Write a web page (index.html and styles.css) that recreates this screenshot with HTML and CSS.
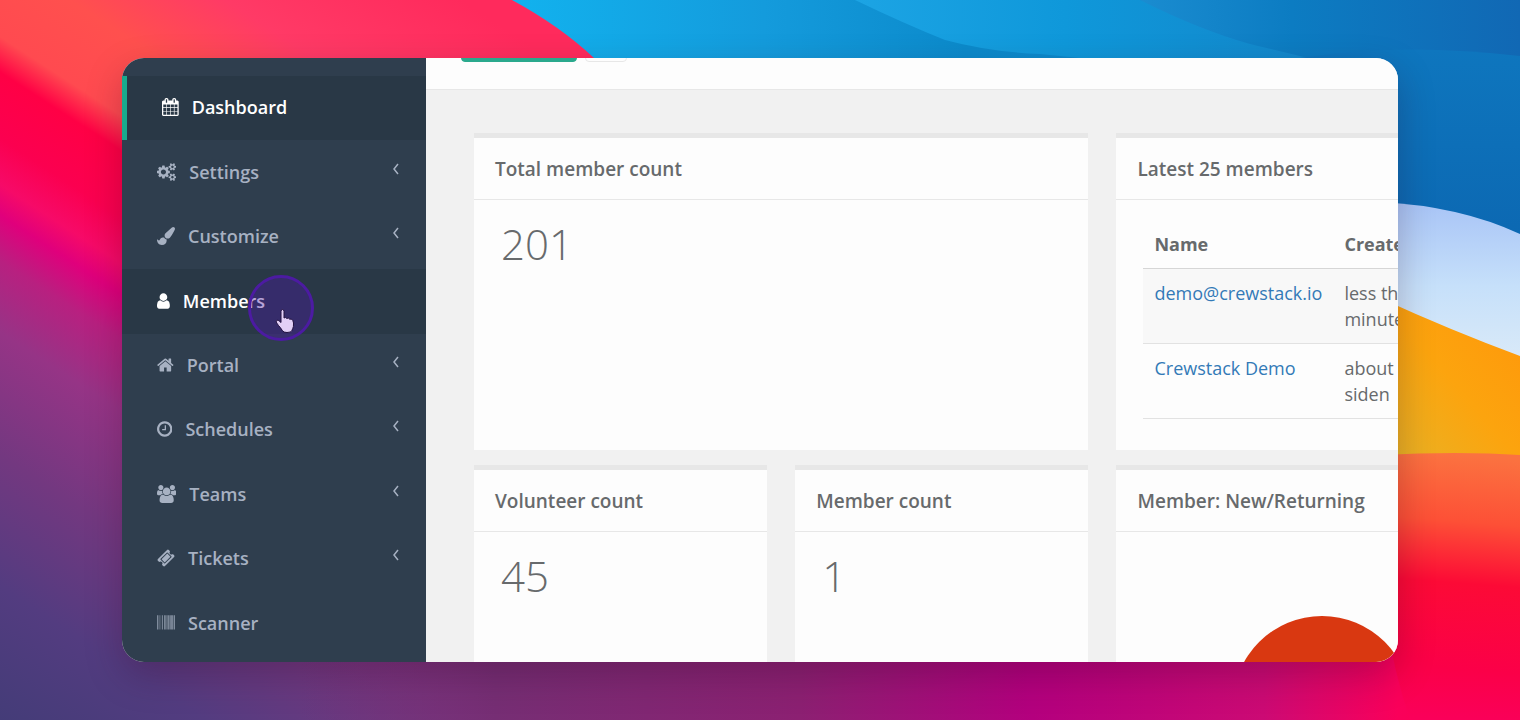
FILE: index.html
```html
<!DOCTYPE html>
<html lang="en">
<head>
    <meta charset="UTF-8">
    <meta name="viewport" content="width=device-width, initial-scale=1.0">
    <title>Crewstack</title>
    <link rel="stylesheet" href="styles.css">
</head>
<body>

    <!-- Wallpaper -->
    <svg class="wallpaper" viewBox="0 0 1520 720" preserveAspectRatio="none" aria-hidden="true">
        <defs>
            <linearGradient id="base" gradientUnits="userSpaceOnUse" x1="0" y1="-300" x2="-466" y2="417">
                <stop offset="0" stop-color="#ff2a5c"/>
                <stop offset=".15" stop-color="#ff3a66"/>
                <stop offset=".25" stop-color="#ff504e"/>
                <stop offset=".33" stop-color="#ff4a50"/>
                <stop offset=".365" stop-color="#ff0045"/>
                <stop offset=".43" stop-color="#fb0050"/>
                <stop offset=".475" stop-color="#f60a68"/>
                <stop offset=".505" stop-color="#e0007c"/>
                <stop offset=".55" stop-color="#b82080"/>
                <stop offset=".62" stop-color="#963486"/>
                <stop offset=".74" stop-color="#733880"/>
                <stop offset=".87" stop-color="#533c80"/>
                <stop offset="1" stop-color="#443c78"/>
            </linearGradient>
            <linearGradient id="floor" gradientUnits="userSpaceOnUse" x1="300" y1="0" x2="1520" y2="0">
                <stop offset="0" stop-color="#6e3078" stop-opacity="0"/>
                <stop offset=".16" stop-color="#762e74"/>
                <stop offset=".41" stop-color="#8c2072"/>
                <stop offset=".6" stop-color="#b4007e"/>
                <stop offset=".79" stop-color="#cc0a74"/>
                <stop offset=".9" stop-color="#fa005a"/>
                <stop offset="1" stop-color="#ff0046"/>
            </linearGradient>
            <linearGradient id="blue">
                <stop offset="0" stop-color="#12b2ee"/>
                <stop offset=".25" stop-color="#149bdc"/>
                <stop offset=".45" stop-color="#0c8acb"/>
                <stop offset=".75" stop-color="#0e86cc"/>
                <stop offset="1" stop-color="#106ab6"/>
            </linearGradient>
            <linearGradient id="wave">
                <stop offset="0" stop-color="#1ca4e4"/>
                <stop offset=".4" stop-color="#0f98da"/>
                <stop offset="1" stop-color="#1482c6"/>
            </linearGradient>
            <linearGradient id="deep">
                <stop offset="0" stop-color="#1a8cd0"/>
                <stop offset=".4" stop-color="#0c7cc2"/>
                <stop offset="1" stop-color="#1168b4"/>
            </linearGradient>
            <linearGradient id="slope" x1="0" y1="0" x2="0" y2="1">
                <stop offset="0" stop-color="#0e76be"/>
                <stop offset="1" stop-color="#0c68b2"/>
            </linearGradient>
            <linearGradient id="snow" x1="0" y1="0" x2="0" y2="1">
                <stop offset="0" stop-color="#a8c4f6"/>
                <stop offset=".5" stop-color="#c6e0fa"/>
                <stop offset="1" stop-color="#dcebf8"/>
            </linearGradient>
            <linearGradient id="sand" x1="1" y1="0" x2="0" y2="1">
                <stop offset="0" stop-color="#ff960a"/>
                <stop offset=".5" stop-color="#fca40e"/>
                <stop offset="1" stop-color="#e6b428"/>
            </linearGradient>
            <linearGradient id="ember" gradientUnits="userSpaceOnUse" x1="1450" y1="454" x2="1430" y2="720">
                <stop offset="0" stop-color="#fb7240"/>
                <stop offset=".25" stop-color="#fd5036"/>
                <stop offset=".48" stop-color="#fc0a36"/>
                <stop offset=".8" stop-color="#fb0048"/>
                <stop offset="1" stop-color="#fa005a"/>
            </linearGradient>
        </defs>
        <rect width="1520" height="720" fill="url(#base)"/>
        <rect x="300" y="400" width="1220" height="320" fill="url(#floor)"/>
        <path d="M512 0Q560 26 594 58L640 110H1398V230L1520 260V0z" fill="url(#blue)"/>
        <path d="M855 0Q905 24 945 40Q990 52 1040 54L1080 58H1380L1140 0z" fill="url(#wave)"/>
        <path d="M1140 0Q1200 30 1250 44Q1300 56 1340 66H1520V0z" fill="url(#deep)"/>
        <path d="M1300 58Q1400 42 1520 56V240L1380 205z" fill="url(#slope)"/>
        <path d="M1380 202Q1460 206 1520 234V370H1380z" fill="url(#snow)"/>
        <path d="M1380 298Q1450 330 1520 356V460H1380z" fill="url(#sand)"/>
        <path d="M1380 455Q1460 451 1520 455V720H1410Q1370 600 1380 455z" fill="url(#ember)"/>
    </svg>

    <div class="window">

        <!-- Sidebar -->
        <nav class="sidebar">
            <ul class="menu">
                <li class="active">
                    <a href="#">
                        <svg class="icon" viewBox="64 0 1664 1792"><path d="M192 1664h288v-288h-288v288zm352 0h320v-288h-320v288zm-352-352h288v-320h-288v320zm352 0h320v-320h-320v320zm-352-384h288v-288h-288v288zm736 736h320v-288h-320v288zm-384-736h320v-288h-320v288zm768 736h288v-288h-288v288zm-384-352h320v-320h-320v320zm-352-864v-288q0-13-9.5-22.5t-22.5-9.5h-64q-13 0-22.5 9.5t-9.5 22.5v288q0 13 9.5 22.5t22.5 9.5h64q13 0 22.5-9.5t9.5-22.5zm736 864h288v-320h-288v320zm-384-384h320v-288h-320v288zm384 0h288v-288h-288v288zm32-480v-288q0-13-9.5-22.5t-22.5-9.5h-64q-13 0-22.5 9.5t-9.5 22.5v288q0 13 9.5 22.5t22.5 9.5h64q13 0 22.5-9.5t9.5-22.5zm384-64v1280q0 52-38 90t-90 38h-1408q-52 0-90-38t-38-90v-1280q0-52 38-90t90-38h128v-96q0-66 47-113t113-47h64q66 0 113 47t47 113v96h384v-96q0-66 47-113t113-47h64q66 0 113 47t47 113v96h128q52 0 90 38t38 90z"/></svg>
                        Dashboard
                    </a>
                </li>
                <li>
                    <a href="#">
                        <svg class="icon" viewBox="-64 0 1920 1792">
                            <path d="M832 896q0-106-75-181t-181-75-181 75-75 181 75 181 181 75 181-75 75-181zm384-91v185q0 10-7 19.5t-16 10.5l-155 24q-11 35-32 76 34 48 90 115 7 11 7 20 0 12-7 19-23 30-82.5 89.5t-78.5 59.5q-11 0-21-7l-115-90q-37 19-77 31-11 108-23 155-7 24-30 24h-186q-11 0-20-7.5t-10-17.5l-23-153q-34-10-75-31l-118 89q-7 7-20 7-11 0-21-8-144-133-144-160 0-9 7-19 10-14 41-53t47-61q-23-44-35-82l-152-24q-10-1-17-9.5t-7-19.5v-185q0-10 7-19.5t16-10.5l155-24q11-35 32-76-34-48-90-115-7-11-7-20 0-12 7-20 22-30 82-89t79-59q11 0 21 7l115 90q34-18 77-32 11-108 23-154 7-24 30-24h186q11 0 20 7.5t10 17.5l23 153q34 10 75 31l118-89q8-7 20-7 11 0 21 8 144 133 144 160 0 8-7 19-12 16-42 54t-45 60q23 48 34 82l152 23q10 2 17 10.5t7 19.5z"/>
                            <path id="cog" d="M1600 1408q0-52-38-90t-90-38-90 38-38 90q0 53 37.5 90.5t90.5 37.5 90.5-37.5 37.5-90.5zm256-70v140q0 16-149 31-12 27-30 52 51 113 51 138 0 4-4 7-122 71-124 71-8 0-46-47t-52-68q-20 2-30 2t-30-2q-14 21-52 68t-46 47q-2 0-124-71-4-3-4-7 0-25 51-138-18-25-30-52-149-15-149-31v-140q0-16 149-31 13-29 30-52-51-113-51-138 0-4 4-7 4-2 35-20t59-34 30-16q8 0 46 46.5t52 67.5q20-2 30-2t30 2q51-71 92-112l6-2q4 0 124 70 4 3 4 7 0 25-51 138 17 23 30 52 149 15 149 31z"/>
                            <use href="#cog" y="-1024"/>
                        </svg>
                        Settings
                        <svg class="arrow" viewBox="0 0 6 12"><path d="M5 1L1 6l4 5"/></svg>
                    </a>
                </li>
                <li>
                    <a href="#">
                        <svg class="icon" viewBox="0 0 1792 1792"><path d="M1615 0q70 0 122.500 46.500t52.500 116.500q0 63-45 151-332 629-465 752-97 91-218 91-126 0-216.500-92.500t-90.500-219.500q0-128 92-212l638-579q59-54 130-54zm-909 1034q39 76 106.500 130t150.500 76l1 71q4 213-129.500 347t-348.500 134q-123 0-218-46.500t-152.500-127.500-86.500-183-29-220q7 5 41 30t62 44.500 59 36.500 46 17q41 0 55-37 25-66 57.500-112.500t69.500-76 88-47.500 103-25.500 125-10.500z"/></svg>
                        Customize
                        <svg class="arrow" viewBox="0 0 6 12"><path d="M5 1L1 6l4 5"/></svg>
                    </a>
                </li>
                <li class="hover">
                    <a href="#">
                        <svg class="icon" viewBox="256 0 1280 1792"><path d="M1536 1399q0 109-62.500 187t-150.500 78h-854q-88 0-150.500-78t-62.500-187q0-85 8.500-160.500t31.500-152 58.500-131 94-89 134.500-34.500q131 128 313 128t313-128q76 0 134.500 34.500t94 89 58.500 131 31.500 152 8.500 160.500zm-256-887q0 159-112.500 271.500t-271.500 112.500-271.500-112.500-112.500-271.500 112.500-271.500 271.500-112.500 271.500 112.500 112.500 271.500z"/></svg>
                        Members
                    </a>
                    <!-- Click highlight with the pointer -->
                    <div class="pointer">
                        <svg class="hand" viewBox="0 0 20 26"><path d="M6 3.500Q6 1.500 7.500 1.500T9 3.500V10Q10.500 8.800 11.800 10.400Q13.500 9.400 14.700 11.200Q16.600 10.400 17.800 12.500Q19 14.500 18.400 18.500Q17.800 21 16.800 22.500Q16.500 24.500 12 24.500Q8.500 24.500 7.500 22.800Q5.500 19.500 3.500 17.500Q1 14.500 1.200 13.200Q1.800 11.600 3.800 12.600L6 14.500z"/></svg>
                    </div>
                </li>
                <li>
                    <a href="#">
                        <svg class="icon" viewBox="64 0 1664 1792"><path d="M1472 992v480q0 26-19 45t-45 19h-384v-384h-256v384h-384q-26 0-45-19t-19-45v-480q0-1 .5-3t.5-3l575-474 575 474q1 2 1 6zm223-69l-62 74q-8 9-21 11h-3q-13 0-21-7l-692-577-692 577q-12 8-24 7-13-2-21-11l-62-74q-8-10-7-23.500t11-21.500l719-599q32-26 76-26t76 26l244 204v-195q0-14 9-23t23-9h192q14 0 23 9t9 23v408l219 182q10 8 11 21.500t-7 23.500z"/></svg>
                        Portal
                        <svg class="arrow" viewBox="0 0 6 12"><path d="M5 1L1 6l4 5"/></svg>
                    </a>
                </li>
                <li>
                    <a href="#">
                        <svg class="icon" viewBox="128 0 1536 1792"><path d="M1024 544v448q0 14-9 23t-23 9h-320q-14 0-23-9t-9-23v-64q0-14 9-23t23-9h224v-352q0-14 9-23t23-9h64q14 0 23 9t9 23zm416 352q0-148-73-273t-198-198-273-73-273 73-198 198-73 273 73 273 198 198 273 73 273-73 198-198 73-273zm224 0q0 209-103 385.500t-279.500 279.500-385.500 103-385.500-103-279.500-279.500-103-385.500 103-385.500 279.500-279.500 385.500-103 385.500 103 279.500 279.500 103 385.500z"/></svg>
                        Schedules
                        <svg class="arrow" viewBox="0 0 6 12"><path d="M5 1L1 6l4 5"/></svg>
                    </a>
                </li>
                <li>
                    <a href="#">
                        <svg class="icon" viewBox="0 0 1920 1792"><path d="M593 896q-162 5-265 128h-134q-82 0-138-40.500t-56-118.500q0-353 124-353 6 0 43.500 21t97.500 42.500 119 21.500q67 0 133-23-5 37-5 66 0 159 81 256zm1071 637q0 120-73 189.500t-194 69.500h-874q-121 0-194-69.500t-73-189.500q0-53 3.500-103.500t14-109 26.500-108.500 43-97.500 62-81 85.500-53.500 111.500-20q10 0 43 21.500t73 48 107 48 135 21.500 135-21.500 107-48 73-48 43-21.500q61 0 111.500 20t85.500 53.500 62 81 43 97.500 26.500 108.500 14 109 3.500 103.500zm-1024-1277q0 106-75 181t-181 75-181-75-75-181 75-181 181-75 181 75 75 181zm704 384q0 159-112.500 271.500t-271.500 112.500-271.500-112.500-112.500-271.500 112.500-271.500 271.500-112.500 271.500 112.500 112.500 271.500zm576 225q0 78-56 118.500t-138 40.500h-134q-103-123-265-128 81-97 81-256 0-29-5-66 66 23 133 23 59 0 119-21.500t97.500-42.500 43.500-21q124 0 124 353zm-128-609q0 106-75 181t-181 75-181-75-75-181 75-181 181-75 181 75 75 181z"/></svg>
                        Teams
                        <svg class="arrow" viewBox="0 0 6 12"><path d="M5 1L1 6l4 5"/></svg>
                    </a>
                </li>
                <li>
                    <a href="#">
                        <svg class="icon" viewBox="0 0 1792 1792"><path d="M1024 452l316 316-572 572-316-316zm-211 979l618-618q19-19 19-45t-19-45l-362-362q-18-18-45-18t-45 18l-618 618q-19 19-19 45t19 45l362 362q18 18 45 18t45-18zm889-637l-907 908q-37 37-90.500 37t-90.500-37l-126-126q56-56 56-136t-56-136-136-56-136 56l-125-126q-37-37-37-90.500t37-90.500l907-906q37-37 90.500-37t90.500 37l125 125q-56 56-56 136t56 136 136 56 136-56l126 125q37 37 37 90.500t-37 90.500z"/></svg>
                        Tickets
                        <svg class="arrow" viewBox="0 0 6 12"><path d="M5 1L1 6l4 5"/></svg>
                    </a>
                </li>
                <li>
                    <a href="#">
                        <svg class="icon" viewBox="0 0 1792 1792"><path d="M0 128h63v1408H0zM94 128h32v1408H94zM220 128h31v1408h-31zM377 128h31v1408h-31zM534 128h62v1408h-62zM722 128h63v1408h-63zM848 128h62v1408h-62zM973 128h63v1408h-63zM1130 128h63v1408h-63zM1256 128h94v1408h-94zM1413 128h62v1408h-62zM1507 128h62v1408h-62zM1664 128h32v1408h-32zM1727 128h65v1408h-65z"/></svg>
                        Scanner
                    </a>
                </li>
            </ul>
        </nav>

        <!-- Main area -->
        <main class="main">
            <div class="topbar">
                <button class="btn btn-primary" type="button" aria-label="Dashboard"></button>
                <button class="btn" type="button" aria-label="More"></button>
            </div>

            <div class="dashboard">
                <section class="card wide">
                    <h2>Total member count</h2>
                    <div class="card-body">
                        <p class="number">201</p>
                    </div>
                </section>

                <section class="card">
                    <h2>Latest 25 members</h2>
                    <div class="card-body">
                        <table class="members">
                            <thead>
                                <tr>
                                    <th>Name</th>
                                    <th>Created</th>
                                </tr>
                            </thead>
                            <tbody>
                                <tr>
                                    <td><a href="#">demo@crewstack.io</a></td>
                                    <td>less than a minute siden</td>
                                </tr>
                                <tr>
                                    <td><a href="#">Crewstack Demo</a></td>
                                    <td>about 2 months siden</td>
                                </tr>
                            </tbody>
                        </table>
                    </div>
                </section>

                <section class="card">
                    <h2>Volunteer count</h2>
                    <div class="card-body">
                        <p class="number">45</p>
                    </div>
                </section>

                <section class="card">
                    <h2>Member count</h2>
                    <div class="card-body">
                        <p class="number">1</p>
                    </div>
                </section>

                <section class="card">
                    <h2>Member: New/Returning</h2>
                    <div class="card-body">
                        <svg class="pie" viewBox="0 0 178 178"><circle cx="89" cy="89" r="89"/></svg>
                    </div>
                </section>
            </div>
        </main>
    </div>

</body>
</html>
```
FILE: styles.css
```css
* {
    box-sizing: border-box;
}

body {
    margin: 0;
    height: 100vh;
    padding: 58px 122px;
    overflow: hidden;
    font-family: "Open Sans", "Noto Sans", sans-serif;
    font-size: 18px;
    line-height: 26px;
    color: #676a6c;
}

a {
    color: #337ab7;
    text-decoration: none;
}

/* Wallpaper */
.wallpaper {
    position: absolute;
    inset: 0;
    width: 100%;
    height: 100%;
    z-index: -1;
}

/* Window */
.window {
    display: flex;
    height: 100%;
    border-radius: 22px;
    overflow: hidden;
    background-color: #f1f1f1;
    box-shadow: 0 14px 36px rgba(40, 0, 30, 0.25);
}

/* Sidebar */
.sidebar {
    flex: 0 0 304px;
    padding: 18px 0 6px;
    background-color: #2f3e4e;
}

.menu {
    display: flex;
    flex-direction: column;
    height: 100%;
    margin: 0;
    padding: 0;
    list-style: none;
}

.menu li {
    flex: 1;
    position: relative;
}

.menu a {
    display: flex;
    align-items: center;
    gap: 13px;
    height: 100%;
    padding: 0 27px 2px 35px;
    color: #a7b1c2;
    font-weight: 600;
}

.menu .active {
    border-left: 5px solid #19aa8d;
}

.menu .active a,
.menu .hover a {
    background-color: #293846;
    color: #fff;
}

.icon {
    height: 18px;
    fill: currentColor;
}

.arrow {
    width: 6px;
    height: 12px;
    margin-left: auto;
    margin-bottom: 6px;
    fill: none;
    stroke: currentColor;
    stroke-width: 1.5;
}

/* Pointer */
.pointer {
    position: absolute;
    left: 126px;
    top: 6px;
    width: 66px;
    height: 66px;
    border: 3px solid #4c1ba2;
    border-radius: 50%;
    background-color: rgba(76, 27, 162, 0.4);
    z-index: 1;
}

.hand {
    position: absolute;
    left: 24px;
    top: 30px;
    width: 20px;
    height: 26px;
    fill: #e2cff6;
    stroke: #21103f;
    stroke-width: 1;
}

/* Main area */
.main {
    flex: 1;
    min-width: 0;
    overflow: hidden;
}

.topbar {
    display: flex;
    gap: 8px;
    height: 32px;
    padding: 0 35px;
    background-color: #fdfdfd;
    border-bottom: 1px solid #e7e7e7;
}

/* The bar is scrolled up, only the lower edge of the buttons shows */
.btn {
    width: 42px;
    height: 40px;
    margin-top: -36px;
    border: 1px solid #e7e7e7;
    border-radius: 4px;
    background-color: #fdfdfd;
}

.btn-primary {
    width: 116px;
    border-color: #2aa98d;
    background-color: #2aa98d;
}

/* Cards */
.dashboard {
    display: grid;
    grid-template-columns: 5fr 5fr 7fr;
    gap: 15px 28px;
    width: 118%;
    padding: 43px 46px 43px 48px;
}

.card {
    min-width: 0;
    border-top: 5px solid #e7e7e7;
    background-color: #fdfdfd;
}

.wide {
    grid-column: span 2;
}

.card h2 {
    margin: 0;
    padding: 18px 21px 17px;
    border-bottom: 1px solid #e7e7e7;
    font-size: 19px;
    font-weight: 600;
    line-height: 26px;
}

.card-body {
    padding: 20px 27px 31px;
}

.number {
    margin: 0;
    font-size: 42px;
    font-weight: 300;
    line-height: 48px;
}

/* Members table */
.members {
    width: 100%;
    border-collapse: collapse;
}

.members th,
.members td {
    padding: 11px;
    border-bottom: 1px solid #e2e2e2;
    text-align: left;
    vertical-align: top;
}

.members th {
    border-bottom-color: #d6d6d6;
}

.members td:first-child {
    width: 1px;
    white-space: nowrap;
}

.members tbody tr:nth-child(odd) {
    background-color: #f8f8f8;
}

.pie {
    display: block;
    width: 178px;
    margin: 64px auto 0;
    fill: #d93811;
}
```
